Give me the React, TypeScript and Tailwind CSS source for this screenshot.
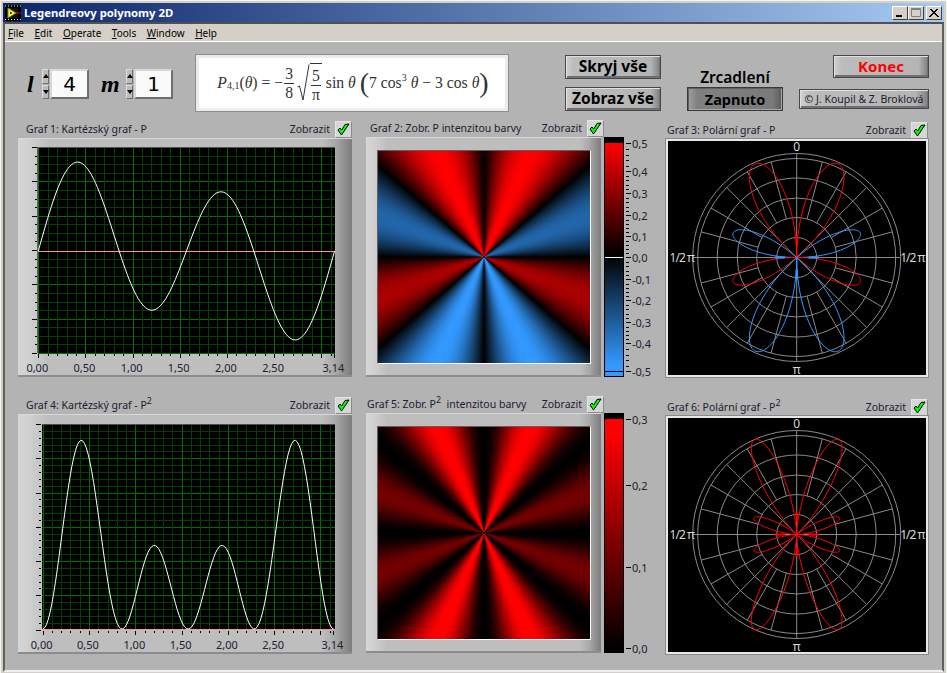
const legendre = (t: number) => {
  const c = Math.cos(t);
  return 0.4731 * Math.sin(t) * (7 * c * c * c - 3 * c);
};

const lobes: [number, number][] = [
  [0, 0.857],
  [0.857, Math.PI / 2],
  [Math.PI / 2, 2.2846],
  [2.2846, Math.PI],
];

const MENU = [
  { key: "F", rest: "ile" },
  { key: "E", rest: "dit" },
  { key: "O", rest: "perate" },
  { key: "T", rest: "ools" },
  { key: "W", rest: "indow" },
  { key: "H", rest: "elp" },
];

const CheckBox = () => (
  <div className="flex h-[17px] w-[17px] items-center justify-center border border-b-[#8a8a8a] border-l-[#e4e4e4] border-r-[#8a8a8a] border-t-[#e4e4e4] bg-[#d6d6d6]">
    <svg width="13" height="13" viewBox="0 0 13 13">
      <path d="M1 7 L4.5 12 L12 1 L8 1.5 L4.7 7 L3 5 Z" fill="#00ff00" stroke="#000" strokeWidth="1" />
    </svg>
  </div>
);

const Header = ({ label, sup, pad, width }: { label: string; sup?: string; pad: string; width: string }) => (
  <div className={`flex h-[18px] shrink-0 items-center justify-between font-['Noto_Sans',sans-serif] text-[10.5px] leading-none text-[#202030] ${width}`}>
    <span className={`whitespace-pre ${pad}`}>
      {label}
      {sup && <sup className="text-[9px]">{sup}</sup>}
      {sup === "2" && label.includes("Zobr") ? "  intenzitou barvy" : ""}
    </span>
    <span className="flex items-center gap-[5px]">
      Zobrazit
      <CheckBox />
    </span>
  </div>
);

const FRAME_BG =
  "bg-[linear-gradient(90deg,#d6d6d6_0%,#cecece_4%,#bebebe_9%,#bebebe_91%,#a8a8a8_95%,#7c7c7c_100%)] border-b-2 border-b-[#8c8c8c] border-t border-t-[#d8d8d8]";

type CartesianProps = {
  left: number;
  right: number;
  top: number;
  bottom: number;
  xZero: number;
  xScale: number;
  yMajor: number;
  yMinor: number;
  zeroY: number;
  yScale: number;
  square?: boolean;
};

const XLABELS = ["0,00", "0,50", "1,00", "1,50", "2,00", "2,50", "3,14"];
const XVALS = [0, 0.5, 1, 1.5, 2, 2.5, 3.14];

const Cartesian = ({ left, right, top, bottom, xZero, xScale, yMajor, yMinor, zeroY, yScale, square }: CartesianProps) => {
  const stepY = (bottom - top) / (yMajor * yMinor);
  const yLines = Array.from({ length: yMajor * yMinor + 1 }, (_, i) => i);
  const xLines = Array.from({ length: 32 }, (_, i) => i);
  const pts = Array.from({ length: 161 }, (_, i) => {
    const t = (i / 160) * Math.PI;
    const v = legendre(t);
    return `${xZero + t * xScale},${zeroY - (square ? v * v : v) * yScale}`;
  }).join(" ");
  return (
    <svg width="334" height="238" className="block overflow-visible font-['Noto_Sans',sans-serif]">
      <rect x={left} y={top} width={right - left} height={bottom - top} fill="#000" />
      <g shapeRendering="crispEdges">
        {yLines
          .filter((i) => Math.abs(Math.round(top + i * stepY) - Math.round(zeroY)) > 1)
          .map((i) => (
            <line key={i} x1={left} x2={right} y1={Math.round(top + i * stepY) + 0.5} y2={Math.round(top + i * stepY) + 0.5} stroke={i % yMinor === 0 ? "#007000" : "#004000"} />
          ))}
        {xLines.map((i) => (
          <line key={i} x1={Math.round(xZero + i * 0.1 * xScale) + 0.5} x2={Math.round(xZero + i * 0.1 * xScale) + 0.5} y1={top} y2={bottom} stroke={i % 5 === 0 ? "#007000" : "#004000"} />
        ))}
        {yLines.map((i) => (
          <line key={i} x1={left - (i % yMinor === 0 ? 6 : 3)} x2={left - 1} y1={Math.round(top + i * stepY) + 0.5} y2={Math.round(top + i * stepY) + 0.5} stroke="#000" />
        ))}
        {xLines.map((i) => (
          <line key={i} x1={Math.round(xZero + i * 0.1 * xScale) + 0.5} x2={Math.round(xZero + i * 0.1 * xScale) + 0.5} y1={bottom + 1} y2={bottom + (i % 5 === 0 ? 5 : 3)} stroke="#000" />
        ))}
        <line x1={Math.round(xZero + 3.14 * xScale) + 0.5} x2={Math.round(xZero + 3.14 * xScale) + 0.5} y1={bottom + 1} y2={bottom + 5} stroke="#000" />
        <line x1={left} x2={right} y1={top + 0.5} y2={top + 0.5} stroke="#505050" />
        <rect x={left} y={Math.round(zeroY)} width={right - left} height="1" fill="#ff9090" />
      </g>
      <polyline points={pts} fill="none" stroke="#fff" strokeWidth="1" />
      {XLABELS.map((label, i) => (
        <text key={label} x={xZero + XVALS[i] * xScale - 1} y={bottom + 19} textAnchor="middle" fontSize="11" fill="#202030">
          {label}
        </text>
      ))}
    </svg>
  );
};

const heatGradient = (color: (t: number) => string) => {
  const stops: string[] = [];
  const n = 180;
  for (let i = 0; i <= n; i++) {
    stops.push(`${color((i / n) * Math.PI)} ${i}deg`);
  }
  for (let i = n; i >= 0; i--) {
    stops.push(`${color((i / n) * Math.PI)} ${360 - i}deg`);
  }
  return `conic-gradient(${stops.join(",")})`;
};

const signedColor = (t: number) => {
  const v = Math.min(1, Math.abs(legendre(t)) / 0.5);
  return legendre(t) >= 0
    ? `rgb(${255 * v},0,0)`
    : `rgb(${51 * v},${153 * v},${255 * v})`;
};

const squareColor = (t: number) => {
  const v = legendre(t);
  return `rgb(${Math.min(255, (255 * v * v) / 0.245)},0,0)`;
};

const HeatFrame = ({ color }: { color: (t: number) => string }) => (
  <div className={`flex h-[240px] w-[238px] items-center justify-center ${FRAME_BG}`}>
    <div className="h-[214px] w-[214px] border-b border-r border-b-white border-l border-l-[#606060] border-r-white border-t border-t-[#606060]" style={{ background: heatGradient(color) }} />
  </div>
);

const ScaleSigned = () => {
  const labels: [string, number][] = [
    ["0,5", 6.5], ["0,4", 34.5], ["0,3", 56.5], ["0,2", 78.5], ["0,1", 99.5], ["0,0", 120.5],
    ["-0,1", 142.5], ["-0,2", 163.5], ["-0,3", 185.5], ["-0,4", 206.5], ["-0,5", 234.5],
  ];
  return (
    <svg width="48" height="240" className="block overflow-visible font-['Noto_Sans',sans-serif]">
      <defs>
        <linearGradient id="barSigned" x1="0" y1="0" x2="0" y2="1">
          <stop offset="0" stopColor="#ff0000" />
          <stop offset="0.505" stopColor="#000" />
          <stop offset="1" stopColor="#3399ff" />
        </linearGradient>
      </defs>
      <rect width="20" height="240" fill="#000" />
      <rect x="1" y="6" width="18" height="222" fill="url(#barSigned)" />
      <rect x="1" y="228" width="18" height="11" fill="#3399ff" />
      <g shapeRendering="crispEdges">
        <line x1="1" x2="19" y1="234.5" y2="234.5" stroke="#000" />
        <line x1="1" x2="19" y1="120.5" y2="120.5" stroke="#fff" />
        {labels.map(([label, y], i) => {
          const next = labels[i + 1]?.[1];
          return (
            <g key={label}>
              <line x1="22" x2="27" y1={y} y2={y} stroke="#000" strokeWidth="1" />
              {next !== undefined && [1, 2, 3, 4].map((k) => (
                <line key={k} x1="22" x2="25" y1={Math.round(y + ((next - y) * k) / 5) + 0.5} y2={Math.round(y + ((next - y) * k) / 5) + 0.5} stroke="#000" />
              ))}
            </g>
          );
        })}
      </g>
      {labels.map(([label, y]) => (
        <text key={label} x="28" y={y + 4} fontSize="11" fill="#202030">
          {label}
        </text>
      ))}
    </svg>
  );
};

const ScaleSquare = () => {
  const labels: [string, number][] = [
    ["0,3", 6.5], ["0,2", 72.5], ["0,1", 154.5], ["0,0", 235.5],
  ];
  return (
    <svg width="48" height="240" className="block overflow-visible font-['Noto_Sans',sans-serif]">
      <defs>
        <linearGradient id="barSquare" x1="0" y1="0" x2="0" y2="1">
          <stop offset="0" stopColor="#ff0000" />
          <stop offset="0.06" stopColor="#ff0000" />
          <stop offset="1" stopColor="#000" />
        </linearGradient>
      </defs>
      <rect width="20" height="240" fill="#000" />
      <rect x="1" y="6" width="18" height="230" fill="url(#barSquare)" />
      <g shapeRendering="crispEdges">
        {labels.map(([label, y]) => (
          <line key={label} x1="22" x2="27" y1={y} y2={y} stroke="#000" />
        ))}
      </g>
      {labels.map(([label, y]) => (
        <text key={label} x="28" y={y + 4} fontSize="11" fill="#202030">
          {label}
        </text>
      ))}
    </svg>
  );
};

const Polar = ({ square }: { square?: boolean }) => {
  const cx = 130.7;
  const cy = 118.5;
  const radius = (t: number) => {
    const v = legendre(t);
    return square ? v * v * 416 : Math.abs(v) * 205;
  };
  const lobe = (from: number, to: number, side: number) =>
    Array.from({ length: 61 }, (_, i) => {
      const t = from + ((to - from) * i) / 60;
      const r = radius(t);
      return `${cx + side * r * Math.sin(t)},${cy - r * Math.cos(t)}`;
    }).join(" ");
  const spokes = Array.from({ length: 24 }, (_, i) => i * 15);
  const red = "#ff0000";
  const blue = square ? "#ff0000" : "#3399ff";
  return (
    <div className="h-[238px] w-[262px] border-2 border-[#e8e8e8] bg-black outline outline-1 outline-[#8a8a8a]">
      <svg width="258" height="234" viewBox="2 2 258 234" className="block overflow-visible font-['Noto_Sans',sans-serif]">
        <g fill="none" stroke="#8a8a8a">
          {[20, 40, 59.5, 79.5, 99, 104].map((r) => (
            <circle key={r} cx={cx} cy={cy} r={r} />
          ))}
          {spokes.map((deg) => {
            const a = (deg * Math.PI) / 180;
            const r0 = deg % 45 === 0 ? 0 : 40;
            return (
              <line
                key={deg}
                x1={cx + r0 * Math.sin(a)}
                y1={cy - r0 * Math.cos(a)}
                x2={cx + (deg % 90 === 0 ? 104 : 99) * Math.sin(a)}
                y2={cy - (deg % 90 === 0 ? 104 : 99) * Math.cos(a)}
              />
            );
          })}
        </g>
        {[1, -1].map((side) =>
          lobes.map(([from, to], i) => (
            <polyline key={`${side}${i}`} points={lobe(from, to, side)} fill="none" stroke={i % 2 === 0 ? red : blue} strokeWidth="1" />
          ))
        )}
        <g stroke={blue} strokeWidth="2">
          <line x1={cx - 22} x2={cx - 12} y1={cy} y2={cy} />
          <line x1={cx + 12} x2={cx + 22} y1={cy} y2={cy} />
          <line x1={cx} x2={cx} y1={cy + 12} y2={cy + 22} />
        </g>
        <line x1={cx} x2={cx} y1={cy - 22} y2={cy - 12} stroke={red} strokeWidth="2" />
        <g fontSize="12" fill="#d8d8d8" textAnchor="middle">
          <text x={cx} y="12">0</text>
          <text x={cx} y="235">π</text>
          <text x="15.7" y={cy + 4} letterSpacing="-1">1/2 π</text>
          <text x="246.3" y={cy + 4} letterSpacing="-1">1/2 π</text>
        </g>
      </svg>
    </div>
  );
};

const Spinner = ({ value }: { value: string }) => (
  <div className="flex h-[30px] items-stretch gap-px">
    <div className="flex w-[7px] flex-col gap-px">
      <div className="flex flex-1 items-center justify-center border border-b-[#707070] border-l-[#dcdcdc] border-r-[#707070] border-t-[#dcdcdc] bg-[#bcbcbc]">
        <div className="h-0 w-0 border-b-[4px] border-l-[3px] border-r-[3px] border-b-black border-l-transparent border-r-transparent" />
      </div>
      <div className="flex flex-1 items-center justify-center border border-b-[#707070] border-l-[#dcdcdc] border-r-[#707070] border-t-[#dcdcdc] bg-[#bcbcbc]">
        <div className="h-0 w-0 border-l-[3px] border-r-[3px] border-t-[4px] border-l-transparent border-r-transparent border-t-black" />
      </div>
    </div>
    <div className="flex w-[39px] items-center justify-center border-2 border-b-[#6e6e6e] border-l-[#d8d8d8] border-r-[#6e6e6e] border-t-[#d8d8d8] bg-[#fafafa] font-['DejaVu_Sans',sans-serif] text-[20px] leading-none text-black">
      {value}
    </div>
  </div>
);

const RAISED =
  "flex items-center justify-center border border-[#484848] bg-[linear-gradient(90deg,#d0d0d0_0%,#bcbcbc_8%,#b4b4b4_90%,#808080_100%)] shadow-[inset_1px_1px_0_#e0e0e0,inset_-1px_-2px_0_#707070]";

const Fraction = ({ top, bottom }: { top: string; bottom: string }) => (
  <span className="mx-px inline-flex flex-col items-center leading-[18px]">
    <span className="border-b border-[#333] px-px">{top}</span>
    <span className="px-px">{bottom}</span>
  </span>
);

const Formula = () => (
  <div className="ml-[23px] flex h-[56px] w-[312px] items-center justify-center border-[3px] border-[#ececec] bg-white pl-[2px] font-['Liberation_Serif',serif] text-[15.7px] text-[#333] outline outline-1 outline-[#8c8c8c]">
    <span className="flex items-center whitespace-pre">
      <i>P</i>
      <sub className="text-[10px]">4,1</sub>
      <span>(<i>θ</i>) = −</span>
      <Fraction top="3" bottom="8" />
      <svg width="14" height="38" viewBox="0 0 13 38" className="ml-px">
        <path d="M1 23 L3 22 L6.5 36 L12.5 0.5" fill="none" stroke="#333" strokeWidth="1" />
      </svg>
      <span className="border-t border-[#333]">
        <Fraction top="5" bottom="π" />
      </span>
      <span> sin <i>θ</i> </span>
      <span className="text-[28px] font-light leading-none">(</span>
      <span>7 cos</span>
      <sup className="text-[10px]">3</sup>
      <span> <i>θ</i> − 3 cos <i>θ</i></span>
      <span className="text-[28px] font-light leading-none">)</span>
    </span>
  </div>
);

export default function App() {
  return (
    <div className="flex h-[673px] w-[947px] flex-col overflow-hidden border-l border-r border-t border-[#f4f4f0] bg-[#d4d0c8] px-[2px] pb-[1px] pt-[2px]">
      <div className="flex h-[19px] shrink-0 items-center justify-between bg-[linear-gradient(90deg,#0a246a,#a6caf0)] pl-[2px] pr-[2px]">
        <div className="flex items-center gap-[3px]">
          <svg width="16" height="16" viewBox="0 0 16 16">
            <rect width="16" height="16" fill="#000" />
            <path d="M0 1h16M0 14.5h16" stroke="#e8e8e8" strokeDasharray="1 2" />
            <rect x="2" y="3" width="11" height="10" fill="#111" />
            <path d="M3 3 L11 8 L3 13 Z" fill="#ffff33" stroke="#808000" />
            <path d="M5 6.5 L7.5 8 L5 9.5 Z" fill="#202020" />
            <path d="M11 8 H16" stroke="#ff0000" />
          </svg>
          <span className="font-['Noto_Sans',sans-serif] text-[11.3px] font-bold leading-none text-white">Legendreovy polynomy 2D</span>
        </div>
        <div className="flex items-center">
          {["min", "max", "close"].map((b) => (
            <div key={b} className={`flex h-[14px] w-[16px] items-center justify-center border border-b-[#404040] border-l-white border-r-[#404040] border-t-white bg-[#d4d0c8] ${b === "close" ? "ml-[2px]" : ""}`}>
              <svg width="12" height="10" viewBox="0 0 12 10">
                {b === "min" && <rect x="2" y="7" width="6" height="2" fill="#000" />}
                {b === "max" && <path d="M1.5 .5h9v8h-9zM1.5 1.5h9" fill="none" stroke="#808080" />}
                {b === "close" && <path d="M2 1 L10 9 M10 1 L2 9 M3 1 L11 9 M9 1 L1 9" stroke="#000" />}
              </svg>
            </div>
          ))}
        </div>
      </div>
      <div className="flex min-h-0 flex-1 flex-col border-2 border-b-[#f0f0f0] border-l-[#606060] border-r-[#606060] border-t-[#505050]">
        <div className="flex h-[18px] shrink-0 items-center gap-[10.5px] border-b border-b-white bg-[#d4d0c8] pl-[3px] font-['Noto_Sans',sans-serif] text-[10px] leading-none text-black">
          {MENU.map((m) => (
            <span key={m.key}>
              <span className="underline">{m.key}</span>
              {m.rest}
            </span>
          ))}
        </div>
        <div className="flex min-h-0 flex-1 flex-col bg-[#b3b3b3]">
          <div className="flex h-[78px] shrink-0 items-start pl-[22px] pt-[13px]">
            <div className="mt-[14px] flex items-center">
              <span className="w-[15px] font-['Liberation_Serif',serif] text-[24px] font-bold italic leading-none text-black">l</span>
              <Spinner value="4" />
              <span className="ml-[12px] w-[25px] font-['Liberation_Serif',serif] text-[24px] font-bold italic leading-none text-black">m</span>
              <Spinner value="1" />
            </div>
            <Formula />
            <div className="ml-[57px] flex flex-col gap-[8px] font-['Noto_Sans',sans-serif] text-[15.5px] font-bold leading-none text-black">
              <div className={`h-[24px] w-[96px] ${RAISED}`}>Skryj vše</div>
              <div className={`h-[24px] w-[96px] ${RAISED}`}>Zobraz vše</div>
            </div>
            <div className="ml-[26px] flex h-[56px] flex-col items-center justify-end font-['Noto_Sans',sans-serif] text-[15.5px] font-semibold leading-none text-black">
              <span className="mb-[2px]">Zrcadlení</span>
              <div className="flex h-[24px] w-[96px] items-center justify-center border border-[#383838] bg-[linear-gradient(90deg,#a0a0a0,#808080_10%,#7a7a7a_90%,#5a5a5a)] text-[14.5px] font-bold shadow-[inset_1px_1px_0_#606060,inset_-1px_-1px_0_#a8a8a8]">Zapnuto</div>
            </div>
            <div className="ml-[16px] flex h-[56px] w-[130px] flex-col items-end justify-between">
              <div className={`h-[23px] w-[96px] font-['Noto_Sans',sans-serif] text-[15px] font-bold leading-none text-[#ff0000] ${RAISED}`}>Konec</div>
              <div className={`mb-[2px] h-[20px] w-[130px] font-['Noto_Sans',sans-serif] text-[10.5px] leading-none text-[#202030] ${RAISED}`}>© J. Koupil &amp; Z. Broklová</div>
            </div>
          </div>
          <div className="grid grid-cols-[334px_286px_262px] grid-rows-[257px_257px] gap-x-[14px] gap-y-[20px] pl-[13px]">
            <div className="flex flex-col justify-end">
              <Header label="Graf 1: Kartézský graf - P" pad="pl-[8px]" width="w-[334px]" />
              <div className={`h-[239px] w-[334px] ${FRAME_BG}`}>
                <Cartesian left={19.5} right={317} top={8} bottom={214} xZero={20.3} xScale={94.3} yMajor={6} yMinor={4} zeroY={112} yScale={178} />
              </div>
            </div>
            <div className="flex flex-col justify-end">
              <Header label="Graf 2: Zobr. P intenzitou barvy" pad="pl-[4px]" width="w-[238px]" />
              <div className="flex gap-[3px]">
                <HeatFrame color={signedColor} />
                <ScaleSigned />
              </div>
            </div>
            <div className="flex flex-col justify-end">
              <Header label="Graf 3: Polární graf - P" pad="pl-[1px]" width="w-[262px]" />
              <Polar />
            </div>
            <div className="flex flex-col justify-end">
              <Header label="Graf 4: Kartézský graf - P" sup="2" pad="pl-[8px]" width="w-[334px]" />
              <div className={`h-[240px] w-[334px] ${FRAME_BG}`}>
                <Cartesian left={24} right={317} top={9} bottom={214.5} xZero={24.7} xScale={92.6} yMajor={6} yMinor={5} zeroY={214} yScale={756} square />
              </div>
            </div>
            <div className="mb-px flex flex-col justify-end">
              <Header label="Graf 5: Zobr. P" sup="2" pad="pl-[1px]" width="w-[238px]" />
              <div className="flex gap-[3px]">
                <HeatFrame color={squareColor} />
                <ScaleSquare />
              </div>
            </div>
            <div className="flex flex-col justify-end">
              <Header label="Graf 6: Polární graf - P" sup="2" pad="pl-[1px]" width="w-[262px]" />
              <Polar square />
            </div>
          </div>
        </div>
      </div>
    </div>
  );
}
